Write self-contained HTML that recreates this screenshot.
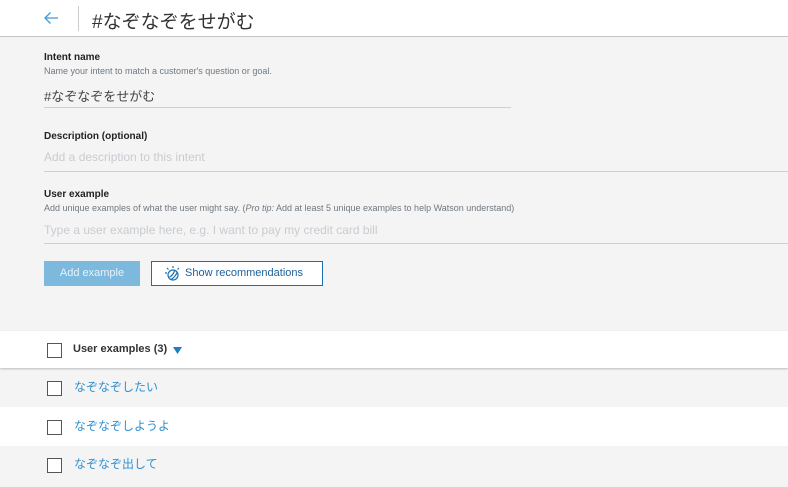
<!DOCTYPE html>
<html><head><meta charset="utf-8"><style>
*{margin:0;padding:0;box-sizing:border-box}
body{width:788px;height:487px;overflow:hidden;background:#f4f4f4;font-family:"Liberation Sans","Noto Sans CJK JP",sans-serif;position:relative;color:#222}
.a{position:absolute;white-space:nowrap}
.lbl{font-size:10px;font-weight:bold;color:#222}
.hint{font-size:9px;color:#6f7880}
.ph{font-size:12px;color:#c8ccd0}
.line{position:absolute;height:1px;background:#d0d0d0}
.cb{position:absolute;left:47px;width:15px;height:15px;border:1.5px solid #555;background:#fff}
.row{position:absolute;left:0;width:788px}
.ex{position:absolute;left:74px;font-size:12px;color:#2f8fd0}
</style></head><body>
<div class="row" style="top:0;height:37px;background:#fff;border-bottom:1px solid #c4c4c4"></div>
<svg class="a" style="left:43px;top:10px" width="16" height="16" viewBox="0 0 16 16"><path d="M15 8H2M7.5 2.5L2 8l5.5 5.5" fill="none" stroke="#3d9ad8" stroke-width="1.3"/></svg>
<div class="a" style="left:78px;top:6px;width:1px;height:25px;background:#ccc"></div>
<div class="a" style="left:92px;top:7px;font-size:19px;color:#333">#なぞなぞをせがむ</div>
<div class="a lbl" style="left:44px;top:52px">Intent name</div>
<div class="a hint" style="left:44px;top:66px">Name your intent to match a customer's question or goal.</div>
<div class="a" style="left:44px;top:86px;font-size:13px;color:#444">#なぞなぞをせがむ</div>
<div class="line" style="left:44px;top:107px;width:467px"></div>
<div class="a lbl" style="left:44px;top:131px">Description (optional)</div>
<div class="a ph" style="left:44px;top:150px">Add a description to this intent</div>
<div class="line" style="left:44px;top:171px;width:744px"></div>
<div class="a lbl" style="left:44px;top:189px">User example</div>
<div class="a hint" style="left:44px;top:203px">Add unique examples of what the user might say. (<i>Pro tip:</i> Add at least 5 unique examples to help Watson understand)</div>
<div class="a ph" style="left:44px;top:223px">Type a user example here, e.g. I want to pay my credit card bill</div>
<div class="line" style="left:44px;top:243px;width:744px"></div>
<div class="a" style="left:44px;top:261px;width:96px;height:25px;background:#7cb9dc;color:#e6f2fa;font-size:11px;line-height:25px;text-align:center">Add example</div>
<div class="a" style="left:151px;top:261px;width:172px;height:25px;border:1px solid #1b6fb0;background:#fff;color:#1b5f9c;font-size:11px;line-height:23px;padding-left:33px">Show recommendations</div>
<svg class="a" style="left:164px;top:265px" width="17" height="17" viewBox="0 0 17 17"><g fill="none" stroke="#1b6fb0" stroke-width="1.2"><circle cx="9" cy="10" r="5"/><path d="M9 1v2M3 3l1.5 1.5M15 3l-1.5 1.5M1 8h2M5.5 12c2-1 4-3 5-6M7 14.5c2-1 5-4 6-7"/></g></svg>
<div class="row" style="top:331px;height:37px;background:#fff;box-shadow:0 1px 2px #bbb"></div>
<div class="cb" style="top:343px"></div>
<div class="a" style="left:73px;top:343px;font-size:11px;font-weight:bold;color:#333">User examples (3)</div>
<svg class="a" style="left:173px;top:347px" width="9" height="7"><path d="M0 0h9L4.5 7z" fill="#1b7fc4"/></svg>
<div class="row" style="top:407px;height:39px;background:#fff"></div>
<div class="cb" style="top:381px"></div><div class="ex" style="top:378px">なぞなぞしたい</div>
<div class="cb" style="top:420px"></div><div class="ex" style="top:417px">なぞなぞしようよ</div>
<div class="cb" style="top:458px"></div><div class="ex" style="top:455px">なぞなぞ出して</div>
</body></html>
